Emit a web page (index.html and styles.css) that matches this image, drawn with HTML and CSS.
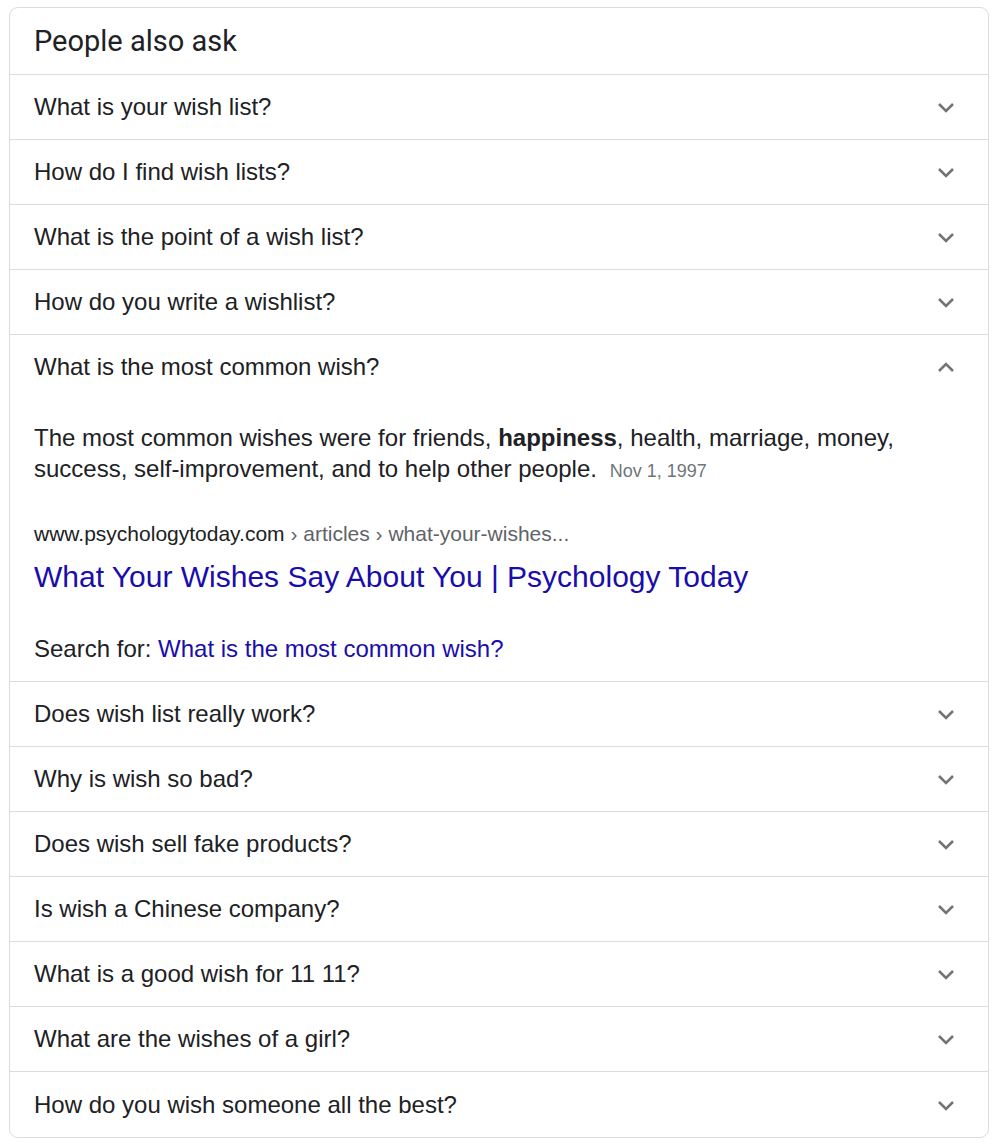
FILE: index.html
```html
<!DOCTYPE html>
<html>
<head>
<meta charset="utf-8">
<link rel="stylesheet" href="styles.css">
</head>
<body>
<div class="card">
  <div class="header">People also ask</div>
  <div class="row"><span class="q">What is your wish list?</span><svg class="chev" viewBox="0 0 24 24"><path d="M5 9l7 7 7-7"/></svg></div>
  <div class="row"><span class="q">How do I find wish lists?</span><svg class="chev" viewBox="0 0 24 24"><path d="M5 9l7 7 7-7"/></svg></div>
  <div class="row"><span class="q">What is the point of a wish list?</span><svg class="chev" viewBox="0 0 24 24"><path d="M5 9l7 7 7-7"/></svg></div>
  <div class="row"><span class="q">How do you write a wishlist?</span><svg class="chev" viewBox="0 0 24 24"><path d="M5 9l7 7 7-7"/></svg></div>
  <div class="expanded">
    <div class="row open"><span class="q">What is the most common wish?</span><svg class="chev" viewBox="0 0 24 24"><path d="M5 16l7-7 7 7"/></svg></div>
    <div class="answer">
      <p class="snippet">The most common wishes were for friends, <b>happiness</b>, health, marriage, money, success, self-improvement, and to help other people. <span class="date">Nov 1, 1997</span></p>
      <div class="cite">www.psychologytoday.com<span class="crumb"> › articles › what-your-wishes...</span></div>
      <a class="title" href="#">What Your Wishes Say About You | Psychology Today</a>
      <div class="search">Search for: <a href="#">What is the most common wish?</a></div>
    </div>
  </div>
  <div class="row"><span class="q">Does wish list really work?</span><svg class="chev" viewBox="0 0 24 24"><path d="M5 9l7 7 7-7"/></svg></div>
  <div class="row"><span class="q">Why is wish so bad?</span><svg class="chev" viewBox="0 0 24 24"><path d="M5 9l7 7 7-7"/></svg></div>
  <div class="row"><span class="q">Does wish sell fake products?</span><svg class="chev" viewBox="0 0 24 24"><path d="M5 9l7 7 7-7"/></svg></div>
  <div class="row"><span class="q">Is wish a Chinese company?</span><svg class="chev" viewBox="0 0 24 24"><path d="M5 9l7 7 7-7"/></svg></div>
  <div class="row"><span class="q">What is a good wish for 11 11?</span><svg class="chev" viewBox="0 0 24 24"><path d="M5 9l7 7 7-7"/></svg></div>
  <div class="row"><span class="q">What are the wishes of a girl?</span><svg class="chev" viewBox="0 0 24 24"><path d="M5 9l7 7 7-7"/></svg></div>
  <div class="row last"><span class="q">How do you wish someone all the best?</span><svg class="chev" viewBox="0 0 24 24"><path d="M5 9l7 7 7-7"/></svg></div>
</div>
</body>
</html>
```

FILE: styles.css
```css
html, body {
  margin: 0;
  padding: 0;
  background: #fff;
}
body {
  padding: 7px 9px;
  font-family: "Liberation Sans", Arial, sans-serif;
  color: #202124;
}
.card {
  width: 978px;
  border: 1px solid #dadce0;
  border-radius: 9px;
  overflow: hidden;
}
.header {
  height: 66px;
  display: flex;
  align-items: center;
  padding-left: 24px;
  font-family: Roboto, "Open Sans", sans-serif;
  font-size: 29px;
  color: #202124;
}
.row {
  height: 64px;
  border-top: 1px solid #dadce0;
  display: flex;
  align-items: center;
  justify-content: space-between;
  padding: 0 30px 0 24px;
}
.row.last {
  height: 65px;
}
.q {
  font-size: 24px;
  line-height: 30px;
}
.chev {
  width: 24px;
  height: 24px;
  fill: none;
  stroke: #70757a;
  stroke-width: 2.6;
}
.answer {
  padding: 23px 24px 17px 24px;
}
.snippet {
  margin: 0;
  font-size: 24px;
  line-height: 31px;
}
.snippet b {
  font-weight: bold;
}
.date {
  font-size: 18px;
  color: #70757a;
  margin-left: 6px;
}
.cite {
  margin-top: 34px;
  font-size: 21px;
  line-height: 26px;
  color: #202124;
}
.crumb {
  color: #5f6368;
}
.title {
  display: block;
  margin-top: 12px;
  font-size: 30px;
  line-height: 36px;
  color: #1a0dab;
  text-decoration: none;
}
.search {
  margin-top: 38px;
  font-size: 24px;
  line-height: 31px;
}
.search a {
  color: #1a0dab;
  text-decoration: none;
}
```
